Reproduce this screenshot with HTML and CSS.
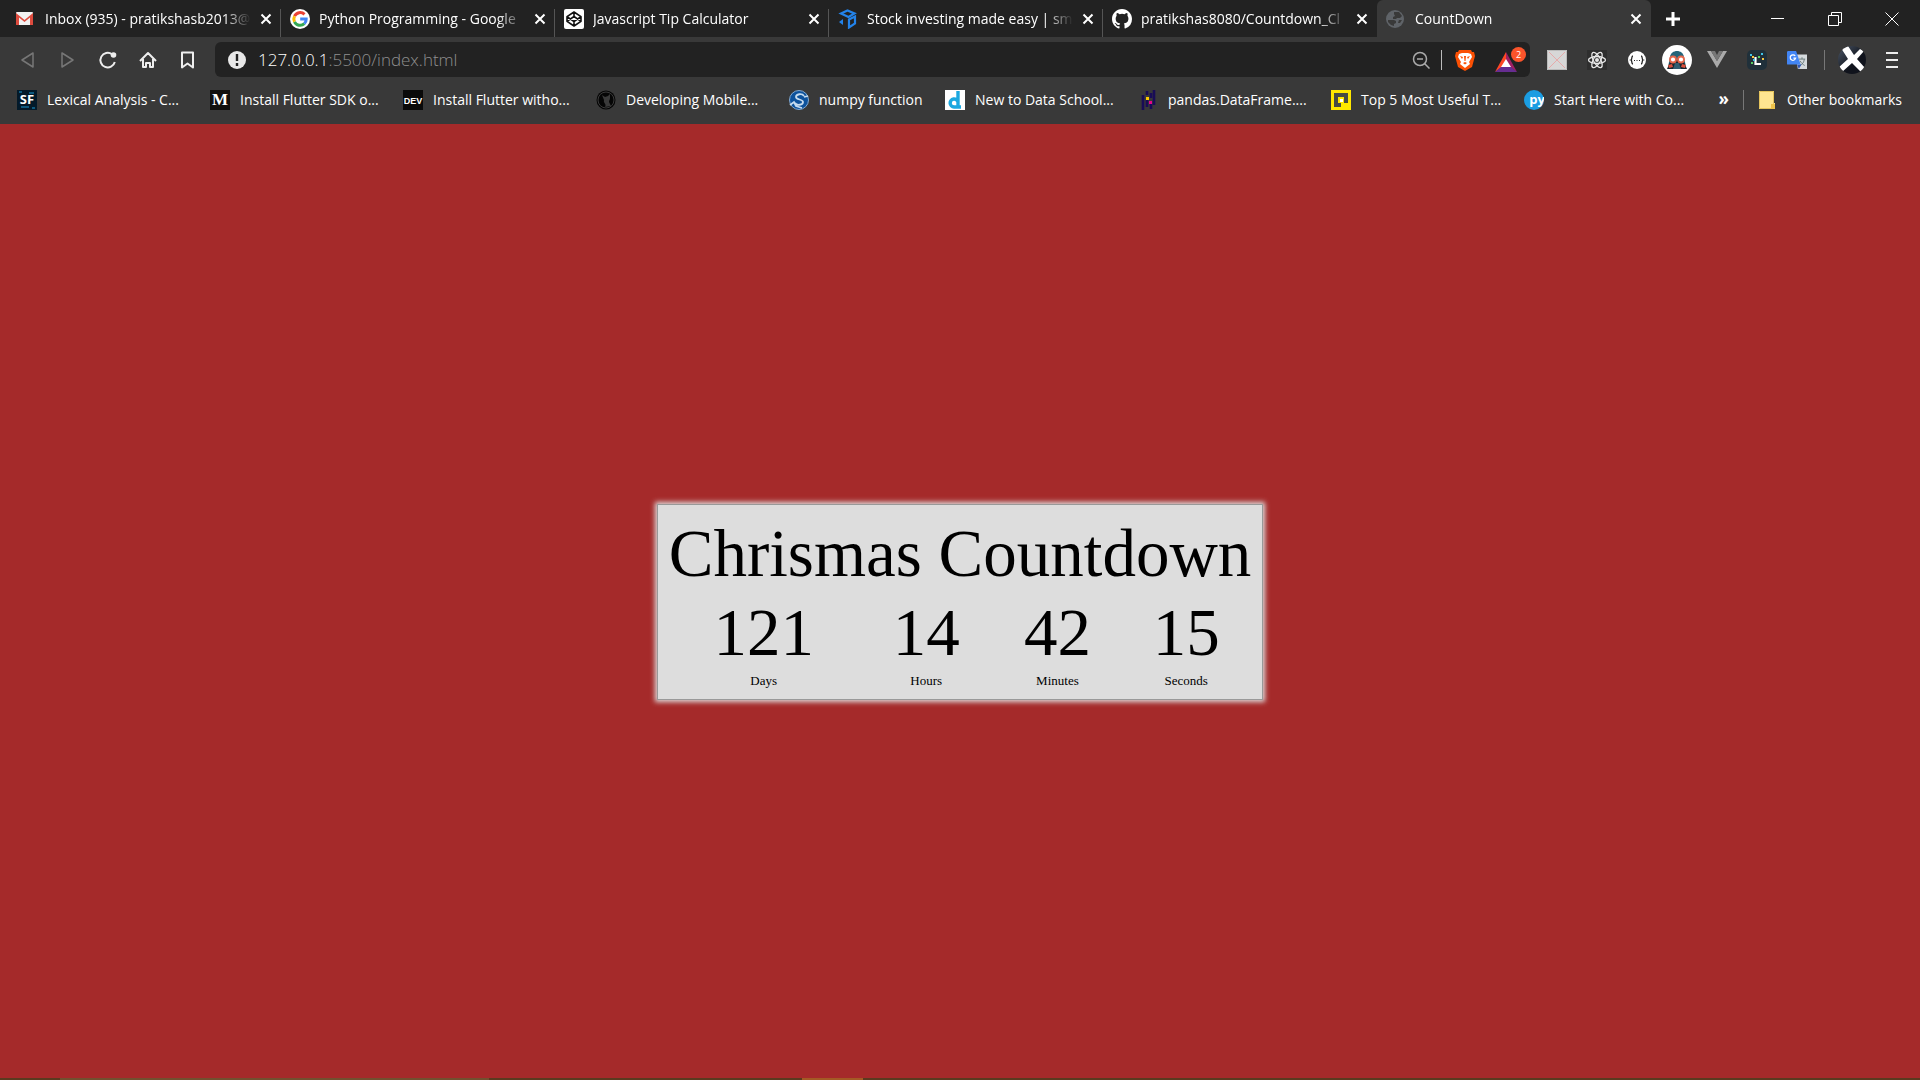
FILE: index.html
```html
<!DOCTYPE html>
<html lang="en">
<head>
<meta charset="utf-8">
<title>CountDown</title>
<link rel="stylesheet" href="styles.css">
</head>
<body>
<header class="browser">
  <div class="tabstrip">
    <div class="tabs">
      <div class="tab">
        <svg class="icon" viewBox="0 0 20 20"><rect x="0" y="3" width="17" height="13" rx="1" fill="#f2f2f2"/><path d="M0 16V4l8.500 7L17 4v12h-3V8.500l-5.500 4.500L3 8.500V16z" fill="#dd4b3e"/></svg>
        <a class="tab-title" href="#">Inbox (935) - pratikshasb2013@</a>
        <button class="tab-close" aria-label="Close tab"><svg viewBox="0 0 12 12"><path d="M1.500 1.500l9 9M10.500 1.500l-9 9"/></svg></button>
      </div>
      <div class="tab">
        <svg class="icon" viewBox="0 0 20 20"><circle cx="10" cy="10" r="10" fill="#fff"/><g fill="none" stroke-width="3"><path d="M14.500 5.400A6.200 6.200 0 0 0 4.500 7.200" stroke="#ea4335"/><path d="M4.500 7.200a6.200 6.200 0 0 0 0 5.600" stroke="#fbbc05"/><path d="M4.500 12.800a6.200 6.200 0 0 0 9.800 1.900" stroke="#34a853"/><path d="M14.300 14.700A6 6 0 0 0 16.200 10H10.200" stroke="#4285f4"/></g></svg>
        <a class="tab-title" href="#">Python Programming - Google</a>
        <button class="tab-close" aria-label="Close tab"><svg viewBox="0 0 12 12"><path d="M1.500 1.500l9 9M10.500 1.500l-9 9"/></svg></button>
      </div>
      <div class="tab">
        <svg class="icon" viewBox="0 0 20 20"><rect width="20" height="20" rx="2" fill="#fff"/><path d="M10 3l7 4.700v4.600L10 17l-7-4.700V7.700zM10 3v4.500M10 12.500V17M3 7.700l7 4.800 7-4.800M3 12.300l7-4.800 7 4.800" fill="none" stroke="#111" stroke-width="1.600" stroke-linejoin="round"/></svg>
        <a class="tab-title" href="#">Javascript Tip Calculator</a>
        <button class="tab-close" aria-label="Close tab"><svg viewBox="0 0 12 12"><path d="M1.500 1.500l9 9M10.500 1.500l-9 9"/></svg></button>
      </div>
      <div class="tab">
        <svg class="icon" viewBox="0 0 20 20"><g fill="none" stroke="#2383ea" stroke-width="2.200"><path d="M3 4.500L9.500 1.500l7 3-6 3.500z"/><path d="M11 10.500l6-3v7l-6 4z"/></g><path d="M1 13l4-3v6z" fill="#2383ea"/></svg>
        <a class="tab-title" href="#">Stock investing made easy | sm</a>
        <button class="tab-close" aria-label="Close tab"><svg viewBox="0 0 12 12"><path d="M1.500 1.500l9 9M10.500 1.500l-9 9"/></svg></button>
      </div>
      <div class="tab">
        <svg class="icon" viewBox="0 0 16 16"><path fill="#fff" d="M8 0C3.580 0 0 3.580 0 8c0 3.540 2.290 6.530 5.470 7.590.4.070.550-.170.550-.380v-1.490c-2.010.370-2.530-.490-2.690-.940-.090-.230-.480-.940-.820-1.130-.280-.150-.680-.520-.010-.530.630-.010 1.080.580 1.230.820.720 1.210 1.870.870 2.330.660.070-.520.280-.870.510-1.070-1.780-.2-3.640-.890-3.640-3.950 0-.870.310-1.590.820-2.150-.080-.2-.360-1.020.080-2.120 0 0 .670-.210 2.200.820a7.500 7.500 0 0 1 4 0c1.530-1.040 2.200-.820 2.200-.820.440 1.100.160 1.920.080 2.120.510.560.820 1.270.820 2.150 0 3.070-1.870 3.750-3.650 3.950.290.250.540.730.540 1.480v2.200c0 .210.150.460.550.380A8 8 0 0 0 16 8c0-4.420-3.580-8-8-8z"/></svg>
        <a class="tab-title" href="#">pratikshas8080/Countdown_Cl</a>
        <button class="tab-close" aria-label="Close tab"><svg viewBox="0 0 12 12"><path d="M1.500 1.500l9 9M10.500 1.500l-9 9"/></svg></button>
      </div>
      <div class="tab tab-active">
        <svg class="icon" viewBox="0 0 20 20"><circle cx="9" cy="10" r="9" fill="#5f6368"/><path d="M8 3h5l3 4-2 2h-3l-1 1H7V8l2-1-1-2zM2 11h6l2 1v2l-2 1v2l-3-1-3-3zM13 11h3l-2 3h-2z" fill="#393939"/></svg>
        <a class="tab-title" href="#">CountDown</a>
        <button class="tab-close" aria-label="Close tab"><svg viewBox="0 0 12 12"><path d="M1.500 1.500l9 9M10.500 1.500l-9 9"/></svg></button>
      </div>
      <button class="tab-new" aria-label="New tab"><svg viewBox="0 0 16 16"><path d="M8 1v14M1 8h14"/></svg></button>
    </div>
    <div class="window-buttons">
      <button aria-label="Minimize"><svg viewBox="0 0 14 14"><path d="M0 6.500h13"/></svg></button>
      <button aria-label="Restore"><svg viewBox="0 0 14 14"><path d="M.5 3.500h10v10h-10zM3.500 3.500v-3h10v10h-3"/></svg></button>
      <button aria-label="Close"><svg viewBox="0 0 14 14"><path d="M.5.5l13 13M13.500.5l-13 13"/></svg></button>
    </div>
  </div>

  <div class="toolbar">
    <div class="nav">
      <button class="tool" aria-label="Back" disabled><svg viewBox="0 0 20 20"><path d="M15 3v14L4 10z" fill="none" stroke="#777" stroke-width="1.500" stroke-linejoin="round"/></svg></button>
      <button class="tool" aria-label="Forward" disabled><svg viewBox="0 0 20 20"><path d="M4 3v14l11-7z" fill="none" stroke="#777" stroke-width="1.500" stroke-linejoin="round"/></svg></button>
      <button class="tool" aria-label="Reload"><svg viewBox="0 0 20 20"><path d="M14 4.200A7.300 7.300 0 1 0 16.800 12" fill="none" stroke="#eee" stroke-width="2"/><circle cx="15.500" cy="5" r="2.800" fill="#eee"/></svg></button>
      <button class="tool" aria-label="Home"><svg viewBox="0 0 20 20"><path d="M2 11l8-8 8 8M5 9v8h3v-4h4v4h3V9" fill="none" stroke="#eee" stroke-width="2" stroke-linejoin="round"/></svg></button>
      <button class="tool" aria-label="Bookmark"><svg viewBox="0 0 20 20"><path d="M4 2.500h11v15l-5.500-4-5.500 4z" fill="none" stroke="#eee" stroke-width="2" stroke-linejoin="round"/></svg></button>
    </div>
    <div class="address">
      <svg class="info" viewBox="0 0 18 18"><circle cx="9" cy="9" r="9" fill="#e8e8e8"/><path d="M9 3v7M9 12v3" stroke="#222" stroke-width="2.400"/></svg>
      <div class="url" role="textbox" aria-label="Address"><span class="host">127.0.0.1</span>:5500/index.html</div>
      <svg class="lens" viewBox="0 0 18 18"><g fill="none" stroke="#aaa" stroke-width="1.500"><circle cx="8" cy="8" r="6.500"/><path d="M5 8h6M12.500 12.500l5 5"/></g></svg>
      <span class="rule"></span>
      <svg class="brave" viewBox="0 0 20 22"><path d="M4 1h12l1 2h2l1 4-3 11-7 4-7-4L0 7l1-4h2z" fill="#fb5004"/><path d="M4 5l3-1h6l3 1 1 3-3 5 1 2-5 4-5-4 1-2-3-5z" fill="#fff"/><path d="M5 7l3 1-1 2zM15 7l-3 1 1 2zM9 7h2l-.5 5h-1zM8 14l2-1 2 1-2 1.500z" fill="#fb5004"/></svg>
      <div class="rewards"><svg viewBox="0 0 22 20"><path d="M11 0L0 20l7-5 4-7z" fill="#ff4724"/><path d="M11 0l11 20-7-5-4-7z" fill="#9e1f63"/><path d="M0 20h22l-6-5H6z" fill="#662d91"/><path d="M11 7l-5 8h10z" fill="#fff"/></svg><span class="badge">2</span></div>
    </div>
    <div class="extensions">
      <button class="tool" aria-label="Extension"><svg viewBox="0 0 20 20"><path d="M0 0h20v20H0z" fill="#d7d7d7"/><path d="M2 2l16 16M18 2L2 18" stroke="#e6aaaa"/><path d="M.5.5h19v19H.5z" fill="none" stroke="#bbb"/></svg></button>
      <button class="tool" aria-label="React tools"><svg viewBox="0 0 20 20"><path d="M0 0h20v20H0z" fill="#2e2e2e"/><g fill="none" stroke="#e6e6e6" stroke-width="1.300"><ellipse cx="10" cy="10" rx="8.500" ry="3.500"/><ellipse cx="10" cy="10" rx="8.500" ry="3.500" transform="rotate(60 10 10)"/><ellipse cx="10" cy="10" rx="8.500" ry="3.500" transform="rotate(120 10 10)"/></g><circle cx="10" cy="10" r="2" fill="#e6e6e6"/></svg></button>
      <button class="tool" aria-label="JSON viewer"><svg viewBox="0 0 20 20"><circle cx="10" cy="10" r="9" fill="#fff"/><path d="M6 6c-2 0-.5 3.500-2 4 1.500.5 0 4 2 4M14 6c2 0 .5 3.500 2 4-1.500.5 0 4-2 4" fill="none" stroke="#222" stroke-width="1.300"/><path d="M7 10h1v1H7zM9.500 10h1v1h-1zM12 10h1v1h-1z" fill="#222"/></svg></button>
      <button class="tool tool-large" aria-label="Octotree"><svg viewBox="0 0 30 30"><circle cx="15" cy="15" r="15" fill="#fff"/><path d="M6 22L8 12C9 4 21 4 22 12l2 10z" fill="#24657a"/><path d="M5 24l4-9h12l4 9z" fill="#16242e"/><path d="M13 18h4l2 6h-8z" fill="#315d70"/><path d="M6 20l4-1 1 3-4 1zM24 20l-4-1-1 3 4 1z" fill="#d9503c"/><g fill="#fff" stroke="#e6674b" stroke-width="1.800"><circle cx="11" cy="14.500" r="3"/><circle cx="19" cy="14.500" r="3"/></g></svg></button>
      <button class="tool" aria-label="Vue tools"><svg viewBox="0 0 20 20"><path d="M0 1h4l6 10 6-10h4L10 18z" fill="#aaa"/><path d="M4 1h4l2 4 2-4h4l-6 10z" fill="#777"/></svg></button>
      <button class="tool" aria-label="Language tools"><svg viewBox="0 0 20 20"><rect width="20" height="20" rx="5" fill="#20303a"/><path d="M8.500 7v7H14" fill="none" stroke="#fff" stroke-width="2.200"/><path d="M3 4h2v2H3zM14 3h2v2h-2zM6 9h2v2H6z" fill="#3fc4e8"/><path d="M4 12h2v2H4zM11 6h2v2h-2z" fill="#56cf62"/><path d="M15 8h2v2h-2zM5 6h2v2H5z" fill="#f5c542"/></svg></button>
      <button class="tool" aria-label="Translate"><svg viewBox="0 0 22 20"><path d="M9 4h13v16H12z" fill="#d5dadd"/><path d="M13 9h7M16.500 7v2M14 16c3-1 5-4 5-7M14.500 11c1 2 3 4 5 5" stroke="#677" fill="none"/><path d="M11 15h5l-3 5z" fill="#3057b5"/><path d="M1 0h9l5 15H1a1 1 0 0 1-1-1V1z" fill="#4285f4"/><path d="M9 5.500A3 3 0 1 0 9.500 8H7" fill="none" stroke="#fff" stroke-width="1.400"/></svg></button>
    </div>
    <span class="rule rule-dim"></span>
    <button class="tool profile" aria-label="Profile"><svg viewBox="0 0 28 28"><defs><clipPath id="disc"><circle cx="14" cy="14" r="14"/></clipPath><linearGradient id="night" x2="1" y2="1"><stop offset="0" stop-color="#4c5868"/><stop offset=".6" stop-color="#10131c"/></linearGradient></defs><g clip-path="url(#disc)"><path d="M0 0h28v28H0z" fill="url(#night)"/><path d="M7 0l3 0 6 9 6-6 4 2-7 8 8 9-4 4-9-9-10 9-4-4 10-9-7-11z" fill="#fff"/></g></svg></button>
    <button class="tool" aria-label="Menu"><svg viewBox="0 0 20 20"><path d="M4 3h12M4 10h12M4 17h12" stroke="#eee" stroke-width="2"/></svg></button>
  </div>

  <nav class="bookmarks" aria-label="Bookmarks">
    <a class="bookmark" href="#"><svg class="icon" viewBox="0 0 20 20"><path d="M0 0h20v20H0z" fill="#031a2a"/><path d="M2 2h3M12 3h5M4 17h8M15 18h3" stroke="#0d5a80" stroke-width="2"/><text class="mark mark-sans" x="10" y="14">SF</text></svg>Lexical Analysis - C...</a>
    <a class="bookmark" href="#"><svg class="icon" viewBox="0 0 20 20"><path d="M0 0h20v20H0z" fill="#12100e"/><text class="mark mark-serif" x="10" y="15">M</text></svg>Install Flutter SDK o...</a>
    <a class="bookmark" href="#"><svg class="icon" viewBox="0 0 20 20"><path d="M0 0h20v20H0z" fill="#0a0a0a"/><text class="mark mark-small" x="10" y="14">DEV</text></svg>Install Flutter witho...</a>
    <a class="bookmark" href="#"><svg class="icon" viewBox="0 0 20 20"><circle cx="10" cy="10" r="9.500" fill="#050505"/><circle cx="10" cy="10" r="8" fill="none" stroke="#3a3a3a"/><path d="M6 5l3 2 3-1 2-2v4c0 2-1 2-1 4l2 4-6 1c2-3-2-4-1-7z" fill="#3a3a3a"/></svg>Developing Mobile...</a>
    <a class="bookmark bookmark-short" href="#"><svg class="icon" viewBox="0 0 20 20"><circle cx="10" cy="10" r="9.500" fill="#0d529c" stroke="#7fa9d4"/><path d="M15 6c-2-3-8-2-8 1s7 2 7 5-6 4-8 1M1 15l4-3 2 4 6 2M15 7l4-1" fill="none" stroke="#c5dbef" stroke-width="1.800"/></svg>numpy function</a>
    <a class="bookmark" href="#"><svg class="icon" viewBox="0 0 20 20"><path d="M0 0h20v20H0z" fill="#fff"/><path d="M13 1v16M13 12a4 4 0 1 0-4 5h7" fill="none" stroke="#1ba8e0" stroke-width="3.400"/></svg>New to Data School...</a>
    <a class="bookmark" href="#"><svg class="icon" viewBox="0 0 20 20"><path d="M5 5v15M9 1v4M9 10v7M13 3v5M13 14v5M16 0v15" stroke="#180c56" stroke-width="2.600"/><path d="M8 7h3v3H8z" fill="#ffca00"/><path d="M11 11h3v3h-3z" fill="#e70488"/></svg>pandas.DataFrame....</a>
    <a class="bookmark" href="#"><svg class="icon" viewBox="0 0 20 20"><path d="M0 0h20v20H0z" fill="#ffe800"/><path d="M3 3h14v10h-4V7H7v6h3v4H3z" fill="#474c43"/><path d="M9 9h3v3H9z" fill="#fff"/></svg>Top 5 Most Useful T...</a>
    <a class="bookmark" href="#"><svg class="icon" viewBox="0 0 20 20"><circle cx="10" cy="10" r="10" fill="#1b9de2"/><text class="mark mark-py" x="13" y="14">py</text></svg>Start Here with Co...</a>
    <button class="more" aria-label="More bookmarks">»</button>
    <span class="rule rule-dim"></span>
    <a class="other" href="#"><svg class="folder" viewBox="0 0 16 18"><path d="M0 0h15v12h1v6H0z" fill="#ffe591"/><path d="M.5.5h14v13h-2v4H.5z" fill="none" stroke="#e5c45c"/><path d="M12 13h4v5h-4z" fill="#eec34a"/></svg>Other bookmarks</a>
  </nav>
</header>

<main class="page">
  <section class="card">
    <h1 class="heading">Chrismas Countdown</h1>
    <div class="units">
      <div class="unit"><div class="value">121</div><div class="label">Days</div></div>
      <div class="unit"><div class="value">14</div><div class="label">Hours</div></div>
      <div class="unit"><div class="value">42</div><div class="label">Minutes</div></div>
      <div class="unit"><div class="value">15</div><div class="label">Seconds</div></div>
    </div>
  </section>
</main>
<footer class="taskbar"><span class="task"></span><span class="task-alert"></span></footer>
</body>
</html>
```
FILE: styles.css
```css
* { box-sizing: border-box; }

body {
  margin: 0;
  min-height: 100vh;
  display: flex;
  flex-direction: column;
  background: #a52a2a;
  font-family: "Liberation Serif", serif;
  color: #000;
}

button {
  padding: 0;
  border: 0;
  background: none;
  color: inherit;
  font: inherit;
}

a { color: inherit; text-decoration: none; }

.browser {
  background: #393939;
  color: #fff;
  font: 14px/20px "Open Sans", sans-serif;
}

.icon { flex: none; width: 20px; height: 20px; }

/* Tabs */
.tabstrip {
  display: flex;
  justify-content: space-between;
  height: 37px;
  padding-left: 7px;
  background: #222;
}

.tabs { display: flex; flex: 0 1 1700px; min-width: 0; }

.tab {
  display: flex;
  align-items: center;
  gap: 9px;
  flex: 0 1 274px;
  min-width: 0;
  padding: 0 9px;
  background: linear-gradient(#555, #555) right bottom / 1px 28px no-repeat;
}

.tab:nth-child(5) { background: none; }

.tab-active { background: #393939; border-radius: 6px 6px 0 0; }

.tab-title {
  flex: 1;
  overflow: hidden;
  white-space: nowrap;
  mask-image: linear-gradient(to right, #000 calc(100% - 28px), transparent);
}

.tab-close { display: flex; width: 12px; height: 12px; }
.tab-close svg { width: 12px; height: 12px; stroke: #fff; stroke-width: 2; }

.tab-new { display: flex; align-items: center; justify-content: center; width: 44px; }
.tab-new svg { width: 16px; height: 16px; stroke: #fff; stroke-width: 3; }

.window-buttons { display: flex; }
.window-buttons button { display: flex; align-items: center; justify-content: center; width: 57px; }
.window-buttons svg { width: 14px; height: 14px; fill: none; stroke: #fff; }

/* Toolbar */
.toolbar { display: flex; align-items: center; height: 45px; padding: 0 8px; }

.nav, .extensions { display: flex; }
.nav { margin-right: 7px; }
.extensions { margin: 0 7px; }

.tool { display: flex; align-items: center; justify-content: center; width: 40px; height: 35px; }
.tool svg { width: 20px; height: 20px; }
.tool-large svg { width: 30px; height: 30px; }
.profile { margin-left: 7px; }
.profile svg { width: 28px; height: 28px; }

.address {
  display: flex;
  align-items: center;
  flex: 1;
  height: 35px;
  padding: 0 5px 0 13px;
  border-radius: 6px;
  background: #222;
}

.info { width: 18px; height: 18px; margin-right: 12px; }
.url { flex: 1; color: #8f8f8f; font-size: 17px; font-weight: 300; line-height: 24px; }
.host { color: #fff; }
.lens { width: 18px; height: 18px; margin-right: 11px; }
.rule { width: 1px; height: 20px; background: #bbb; }
.rule-dim { background: #777; }
.brave { width: 20px; height: 22px; margin: 0 20px 0 13px; }

.rewards { position: relative; display: flex; width: 30px; height: 24px; align-items: flex-end; }
.rewards svg { width: 22px; height: 20px; }
.badge {
  position: absolute;
  top: -1px;
  right: -1px;
  width: 15px;
  height: 15px;
  border-radius: 8px;
  background: #fb542b;
  font-size: 9px;
  line-height: 15px;
  text-align: center;
}

/* Bookmarks */
.bookmarks { display: flex; align-items: center; height: 42px; padding: 0 18px 6px 17px; white-space: nowrap; }
.bookmark { display: flex; align-items: center; gap: 10px; flex: 0 1 193px; min-width: 0; }
.bookmark-short { flex-basis: 156px; }
.more { margin-left: auto; margin-right: 14px; padding-bottom: 3px; font-weight: 700; font-size: 17px; }
.other { display: flex; align-items: center; gap: 12px; margin-left: 15px; }
.folder { width: 16px; height: 18px; }

.mark { fill: #fff; font-family: "Open Sans", sans-serif; font-weight: 700; text-anchor: middle; }
.mark-sans { font-size: 13px; }
.mark-serif { font-family: "Liberation Serif", serif; font-size: 17px; }
.mark-small { font-family: "Liberation Sans", sans-serif; font-size: 9px; }
.mark-py { font-size: 13px; }

/* Countdown */
.page { flex: 1; display: flex; align-items: center; justify-content: center; }

.card {
  padding: 9px 11px 10px;
  border: 1px solid #999;
  background: #ddd;
  box-shadow: 0 0 5px 2px #ddd;
}

.heading { margin: 0; font-size: 67px; font-weight: 400; line-height: 79px; }
.units { display: grid; grid-template-columns: 191fr 136fr 128fr 131fr; text-align: center; }
.value { font-size: 67px; line-height: 79px; }
.label { padding-top: 1px; font-size: 13px; line-height: 16px; }

/* Edge of the hidden taskbar */
.taskbar { display: flex; height: 2px; margin-top: -2px; background: #5a3a1f; }
.task { width: 429px; margin-left: 60px; background: #72502f; }
.task-alert { width: 61px; margin-left: 313px; background: #a45a25; }
```
